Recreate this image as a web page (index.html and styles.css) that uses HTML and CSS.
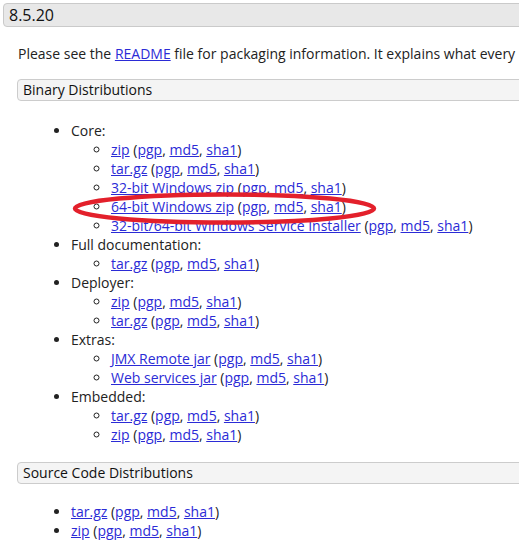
FILE: index.html
```html
<!DOCTYPE html>
<html>
<head>
<meta charset="utf-8">
<link rel="stylesheet" href="styles.css">
</head>
<body>
<div class="page">
  <h2 class="version">8.5.20</h2>
  <div class="content">
    <p class="intro">Please see the <a href="#">README</a> file for packaging information. It explains what every</p>

    <h3 class="section">Binary Distributions</h3>
    <div class="list-wrap">
      <ul class="list top">
        <li>Core:
          <ul class="list sub">
            <li><a href="#">zip</a> (<a href="#">pgp</a>, <a href="#">md5</a>, <a href="#">sha1</a>)</li>
            <li><a href="#">tar.gz</a> (<a href="#">pgp</a>, <a href="#">md5</a>, <a href="#">sha1</a>)</li>
            <li><a href="#">32-bit Windows zip</a> (<a href="#">pgp</a>, <a href="#">md5</a>, <a href="#">sha1</a>)</li>
            <li><a href="#">64-bit Windows zip</a> (<a href="#">pgp</a>, <a href="#">md5</a>, <a href="#">sha1</a>)</li>
            <li><a href="#">32-bit/64-bit Windows Service Installer</a> (<a href="#">pgp</a>, <a href="#">md5</a>, <a href="#">sha1</a>)</li>
          </ul>
        </li>
        <li>Full documentation:
          <ul class="list sub">
            <li><a href="#">tar.gz</a> (<a href="#">pgp</a>, <a href="#">md5</a>, <a href="#">sha1</a>)</li>
          </ul>
        </li>
        <li>Deployer:
          <ul class="list sub">
            <li><a href="#">zip</a> (<a href="#">pgp</a>, <a href="#">md5</a>, <a href="#">sha1</a>)</li>
            <li><a href="#">tar.gz</a> (<a href="#">pgp</a>, <a href="#">md5</a>, <a href="#">sha1</a>)</li>
          </ul>
        </li>
        <li>Extras:
          <ul class="list sub">
            <li><a href="#">JMX Remote jar</a> (<a href="#">pgp</a>, <a href="#">md5</a>, <a href="#">sha1</a>)</li>
            <li><a href="#">Web services jar</a> (<a href="#">pgp</a>, <a href="#">md5</a>, <a href="#">sha1</a>)</li>
          </ul>
        </li>
        <li>Embedded:
          <ul class="list sub">
            <li><a href="#">tar.gz</a> (<a href="#">pgp</a>, <a href="#">md5</a>, <a href="#">sha1</a>)</li>
            <li><a href="#">zip</a> (<a href="#">pgp</a>, <a href="#">md5</a>, <a href="#">sha1</a>)</li>
          </ul>
        </li>
      </ul>
      <svg class="annotation" width="305" height="33" viewBox="0 0 305 33">
        <ellipse cx="152.5" cy="16.5" rx="149.5" ry="14" fill="none" stroke="#e3202b" stroke-width="4.5"/>
      </svg>
    </div>

    <h3 class="section">Source Code Distributions</h3>
    <ul class="list top source">
      <li><a href="#">tar.gz</a> (<a href="#">pgp</a>, <a href="#">md5</a>, <a href="#">sha1</a>)</li>
      <li><a href="#">zip</a> (<a href="#">pgp</a>, <a href="#">md5</a>, <a href="#">sha1</a>)</li>
    </ul>
  </div>
</div>
</body>
</html>
```
FILE: styles.css
```css
html, body {
  margin: 0;
  padding: 0;
  background: #fff;
  overflow: hidden;
}
body {
  font-family: "Open Sans", "Liberation Sans", sans-serif;
  font-size: 14px;
  line-height: 19px;
  color: #222;
}
.page {
  padding: 3px 0 0 3px;
  width: 560px;
}
.version {
  margin: 0;
  height: 22px;
  line-height: 22px;
  padding: 0 5px;
  font-size: 16px;
  font-weight: normal;
  color: #111;
  background: #e8e8e8;
  border: 1px solid #cacaca;
  border-radius: 4px;
}
.content {
  padding-left: 14px;
}
.intro {
  margin: 17px 0 0 1px;
  white-space: nowrap;
}
a {
  color: #2b2bd6;
  text-decoration: underline;
}
.section {
  margin: 16px 0 0 0;
  height: 20px;
  line-height: 20px;
  padding: 0 5px;
  font-size: 14px;
  font-weight: normal;
  color: #111;
  background: #f4f4f4;
  border: 1px solid #cccccc;
  border-radius: 4px;
}
.list-wrap {
  position: relative;
}
.list {
  margin: 0;
  padding: 0;
}
.list.top {
  margin-top: 20px;
  padding-left: 54px;
  list-style: disc;
}
.list.sub {
  padding-left: 40px;
  list-style: circle;
}
.list li {
  white-space: nowrap;
}
.annotation {
  position: absolute;
  left: 55px;
  top: 71px;
}
.list.top.source {
  margin-top: 18px;
}
.list-wrap + .section {
  margin-top: 18px;
}
```
